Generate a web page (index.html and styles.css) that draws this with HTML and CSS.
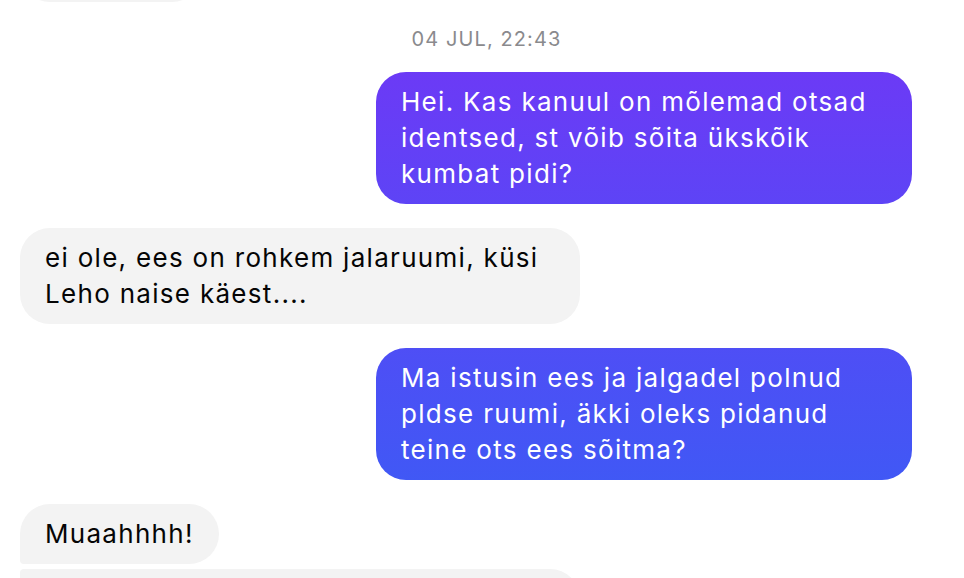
FILE: index.html
```html
<!DOCTYPE html>
<html lang="et">
<head>
  <meta charset="UTF-8" />
  <title>Vestlus</title>
  <link rel="stylesheet" href="styles.css">
</head>
<body>
  <div class="chat">
    <div class="msg in cut">Jah, aitäh</div>

    <div class="stamp">04 JUL, 22:43</div>

    <div class="msg out">Hei. Kas kanuul on mõlemad otsad identsed, st võib sõita ükskõik kumbat pidi?</div>

    <div class="msg in">ei ole, ees on rohkem jalaruumi, küsi Leho naise käest....</div>

    <div class="msg out">Ma istusin ees ja jalgadel polnud pldse ruumi, äkki oleks pidanud teine ots ees sõitma?</div>

    <div class="msg in first">Muaahhhh!</div>
    <div class="msg in next">Tagumine ots on ju kitsam, seal pole jalgadele üldse ruumi</div>
  </div>
</body>
</html>
```

FILE: styles.css
```css
html, body {
  margin: 0;
  height: 100%;
  overflow: hidden;
  background: #fff;
}

body {
  font-family: 'Inter', 'Noto Sans', sans-serif;
}

.chat {
  display: flex;
  flex-direction: column;
  padding: 0 52px 0 20px;
}

.msg {
  box-sizing: border-box;
  padding: 12px 25px;
  border-radius: 30px;
  font-size: 26px;
  line-height: 36px;
  letter-spacing: 1.3px;
  margin-top: 24px;
}

.msg.in {
  align-self: flex-start;
  max-width: 560px;
  background: #f3f3f3;
  color: #050505;
}

.msg.out {
  align-self: flex-end;
  max-width: 536px;
  color: #fff;
  background: linear-gradient(180deg, #7335f6 0%, #365ff5 100%) fixed;
}

.msg.cut {
  margin-top: -58px;
}

.msg.first {
  border-bottom-left-radius: 4px;
}

.msg.next {
  margin-top: 5px;
  border-top-left-radius: 4px;
}

.stamp {
  align-self: center;
  margin: 25px 0 -3px 41px;
  font-size: 20px;
  line-height: 24px;
  letter-spacing: 1.1px;
  color: #8a8a8d;
}
```
